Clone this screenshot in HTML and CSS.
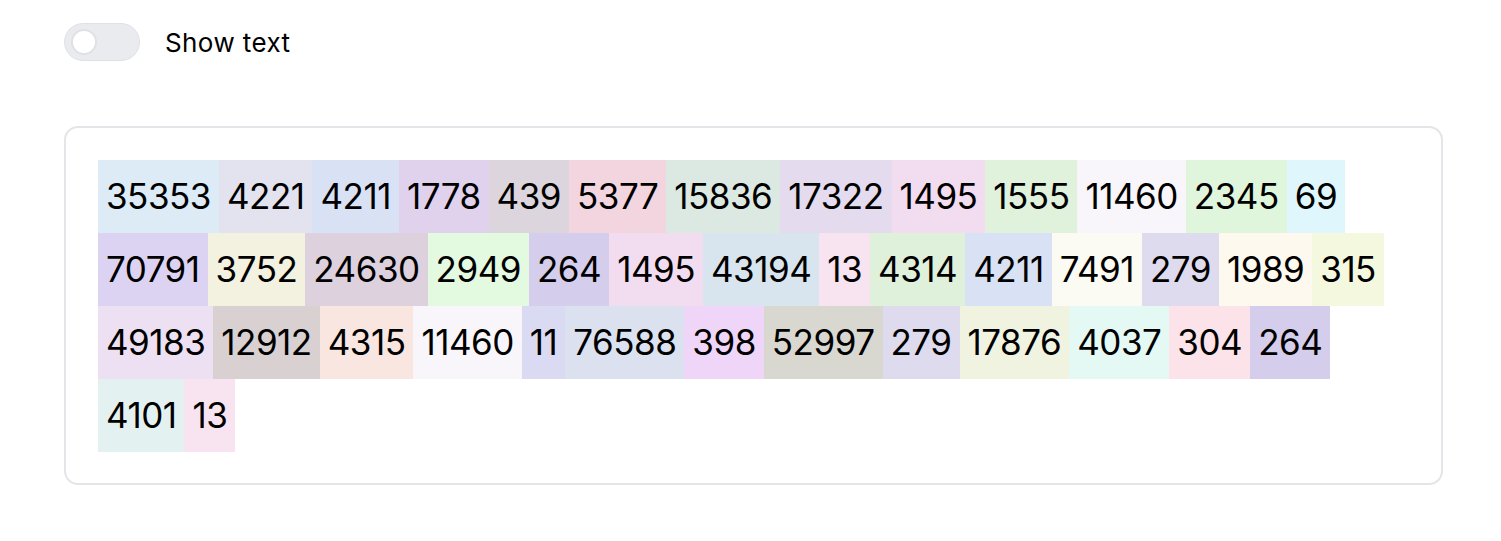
FILE: index.html
```html
<!DOCTYPE html>
<html lang="en">
<head>
    <meta charset="UTF-8">
    <title>Token Viewer</title>
    <link rel="stylesheet" href="styles.css">
</head>
<body>
    <div class="page">
        <label class="toggle-row">
            <span class="toggle"><span class="knob"></span></span>
            <span class="toggle-label">Show text</span>
        </label>
        <div class="card">
            <div class="tokens" id="tokens"></div>
        </div>
    </div>

    <script>
        const tokens = [
            [35353, '#dcebf6'], [4221, '#e2e3ef'], [4211, '#d8e2f4'], [1778, '#e0d1ec'],
            [439, '#dcd5de'], [5377, '#f3d5e0'], [15836, '#dce9e2'], [17322, '#e4dcee'],
            [1495, '#f2dcf0'], [1555, '#e0f1dc'], [11460, '#f8f6fa'], [2345, '#e0f6dc'],
            [69, '#dff7fc'],
            [70791, '#dcd3f2'], [3752, '#f3f1e0'], [24630, '#ddd1de'], [2949, '#e3f9e0'],
            [264, '#d4cdeb'], [1495, '#f2dcf0'], [43194, '#d8e5ee'], [13, '#f8e3f0'],
            [4314, '#dff1da'], [4211, '#d8e2f4'], [7491, '#fbfbf3'], [279, '#dfdbee'],
            [1989, '#fdf9ee'], [315, '#f4f8df'],
            [49183, '#ede0f3'], [12912, '#d9d0d1'], [4315, '#f9e6e0'], [11460, '#f8f6fa'],
            [11, '#dbdaf3'], [76588, '#dbe1ee'], [398, '#efd5f8'], [52997, '#d8d7d0'],
            [279, '#dfdbee'], [17876, '#f1f3e1'], [4037, '#e5f9f4'], [304, '#fbe3e9'],
            [264, '#d4cdeb'],
            [4101, '#e3f1f0'], [13, '#f8e3f0']
        ];

        const box = document.getElementById('tokens');
        tokens.forEach(([id, color]) => {
            const span = document.createElement('span');
            span.className = 'token';
            span.style.backgroundColor = color;
            span.innerText = id;
            box.appendChild(span);
        });
    </script>
</body>
</html>
```

FILE: styles.css
```css
body {
    margin: 0;
    padding: 0;
    font-family: "Inter", "Liberation Sans", sans-serif;
    color: #000000;
    background-color: #ffffff;
}

.page {
    padding: 23px 58px 0 64px;
}

.toggle-row {
    display: flex;
    align-items: center;
    gap: 25px;
    height: 38px;
}

.toggle {
    display: flex;
    align-items: center;
    width: 76px;
    height: 38px;
    box-sizing: border-box;
    padding: 0 8px;
    border: 1.5px solid #dfe1e6;
    border-radius: 19px;
    background-color: #e9ebef;
}

.knob {
    width: 22px;
    height: 22px;
    border-radius: 50%;
    background-color: #ffffff;
    box-shadow: 0 0 0 2px #dfe1e5;
}

.toggle-label {
    font-size: 26px;
    letter-spacing: 0.4px;
}

.card {
    margin-top: 65px;
    height: 359px;
    box-sizing: border-box;
    padding: 32px;
    border: 2px solid #e3e5e8;
    border-radius: 14px;
}

.tokens {
    display: flex;
    flex-wrap: wrap;
}

.token {
    height: 73px;
    line-height: 73px;
    padding: 0 8px;
    font-size: 35px;
    letter-spacing: -0.5px;
    white-space: pre;
}
```
